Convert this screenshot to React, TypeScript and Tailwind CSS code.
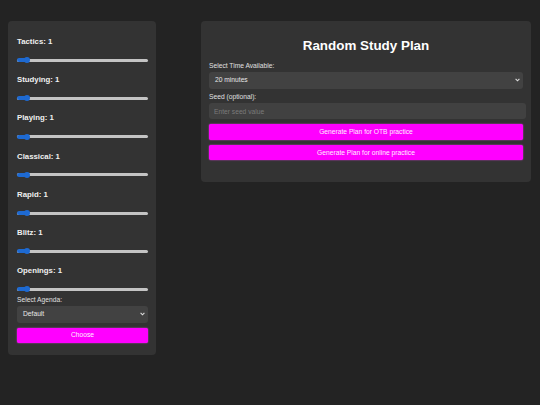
const skills = ["Tactics", "Studying", "Playing", "Classical", "Rapid", "Blitz", "Openings"];

function Slider() {
  return (
    <div className="relative h-[6px] w-[131px]">
      <div className="absolute left-0 right-0 top-[1.5px] h-[3px] rounded-full bg-[#c4c4c4]" />
      <div className="absolute left-0 top-[1px] h-[4px] w-[12px] rounded-full bg-[#1e6ad2]" />
      <div className="absolute left-[7px] top-0 h-[6px] w-[6px] rounded-full bg-[#1e6ad2]" />
    </div>
  );
}

function Chevron() {
  return (
    <svg width="5" height="4" viewBox="0 0 5 4" className="shrink-0">
      <path d="M0.6 0.8 L2.5 2.8 L4.4 0.8" fill="none" stroke="#ddd" strokeWidth="1.1" />
    </svg>
  );
}

function Select({ value, h }: { value: string; h: string }) {
  return (
    <div className={`flex items-center justify-between rounded-[3px] bg-[#424242] pl-[6px] pr-[3px] text-[6.7px] leading-[8px] text-[#e8e8e8] ${h}`}>
      <span>{value}</span>
      <Chevron />
    </div>
  );
}

function MagentaButton({ label }: { label: string }) {
  return (
    <button className="flex h-[15.5px] w-full items-center justify-center rounded-[2px] bg-[#ff00ff] text-[6.7px] leading-[8px] text-[#fff0ff] shadow-[0_0_1.5px_#ff40ff]">
      {label}
    </button>
  );
}

export default function App() {
  return (
    <div
      className="flex min-h-screen items-start gap-[45px] bg-[#232323] pl-[8px] pt-[21px] text-white"
      style={{ fontFamily: '"Liberation Sans", Arial, sans-serif' }}
    >
      <div className="flex w-[148px] flex-col rounded-[4px] bg-[#333333] pb-[11.7px] pl-[9px] pr-[8px] pt-[16px]">
        {skills.map((s, i) => (
          <div key={s} className={i === 0 ? "" : "mt-[11.9px]"}>
            <div className="h-[10px] text-[7.8px] font-bold leading-[10px] text-[#f0f0f0]">{s}: 1</div>
            <div className="mt-[10.3px]">
              <Slider />
            </div>
          </div>
        ))}
        <div className="mt-[3.6px] text-[6.7px] leading-[8px] text-[#e0e0e0]">Select Agenda:</div>
        <div className="mt-[1.7px]">
          <Select value="Default" h="h-[17px]" />
        </div>
        <div className="mt-[5px]">
          <MagentaButton label="Choose" />
        </div>
      </div>

      <div className="flex w-[330px] flex-col rounded-[4px] bg-[#333333] pb-[21.7px] pl-[8px] pr-[8px] pt-[17px]">
        <h1 className="text-center text-[13.4px] font-bold leading-[16px] text-white">Random Study Plan</h1>
        <div className="mt-[8px] text-[6.7px] leading-[8px] text-[#e0e0e0]">Select Time Available:</div>
        <div className="mt-[1.7px]">
          <Select value="20 minutes" h="h-[17.3px]" />
        </div>
        <div className="mt-[3.7px] text-[6.7px] leading-[8px] text-[#e0e0e0]">Seed (optional):</div>
        <input
          placeholder="Enter seed value"
          className="mt-[2.6px] h-[16px] w-[317px] rounded-[3px] bg-[#414141] pl-[5px] text-[6.7px] text-[#eee] outline-none placeholder:text-[#7a7a7a]"
        />
        <div className="mt-[5px]">
          <MagentaButton label="Generate Plan for OTB practice" />
        </div>
        <div className="mt-[5px]">
          <MagentaButton label="Generate Plan for online practice" />
        </div>
      </div>
    </div>
  );
}
